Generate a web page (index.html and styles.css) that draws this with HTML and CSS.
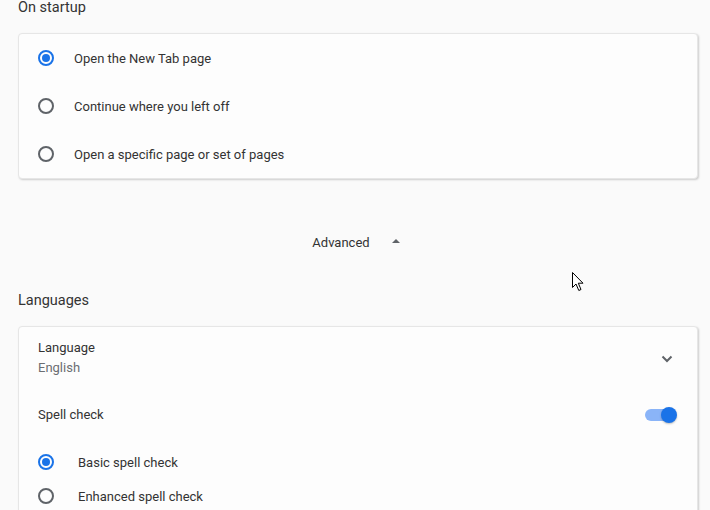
FILE: index.html
```
<!DOCTYPE html>
<html lang="en">
<head>
    <meta charset="UTF-8">
    <meta name="viewport" content="width=device-width, initial-scale=1.0">
    <title>Settings</title>
    <link rel="stylesheet" href="styles.css">
</head>
<body>
    <div class="page">
        <h2 class="section-title">On startup</h2>
        <div class="card">
            <label class="radio-row">
                <span class="radio checked"></span>
                <span class="radio-label">Open the New Tab page</span>
            </label>
            <label class="radio-row">
                <span class="radio"></span>
                <span class="radio-label">Continue where you left off</span>
            </label>
            <label class="radio-row">
                <span class="radio"></span>
                <span class="radio-label">Open a specific page or set of pages</span>
            </label>
        </div>

        <div class="advanced">
            <span>Advanced</span>
            <span class="arrow-up"></span>
        </div>

        <h2 class="section-title">Languages</h2>
        <div class="card">
            <div class="setting-row tall">
                <div class="setting-text">
                    <div>Language</div>
                    <div class="secondary">English</div>
                </div>
                <svg class="chevron" width="12" height="8" viewBox="0 0 12 8">
                    <path d="M1.5 1.5 L6 6 L10.5 1.5" fill="none" stroke="#5f6368" stroke-width="2"/>
                </svg>
            </div>
            <div class="setting-row">
                <div class="setting-text">Spell check</div>
                <span class="toggle"><span class="knob"></span></span>
            </div>
            <div class="radio-group">
                <label class="radio-row small">
                    <span class="radio checked"></span>
                    <span class="radio-label">Basic spell check</span>
                </label>
                <label class="radio-row small">
                    <span class="radio"></span>
                    <span class="radio-label">Enhanced spell check</span>
                </label>
            </div>
        </div>
    </div>

    <svg class="cursor" width="13" height="20" viewBox="0 0 13 20">
        <path d="M0.5 0.5 L0.5 15.5 L4 12 L6.8 18.5 L9 17.5 L6.3 11.2 L11 11.2 Z" fill="#fff" stroke="#000" stroke-width="1"/>
    </svg>
</body>
</html>
```

FILE: styles.css
```
body {
    margin: 0;
    font-family: Roboto, "Noto Sans", Arial, sans-serif;
    font-size: 13px;
    color: #333;
    background-color: #fafafa;
    overflow: hidden;
}

.page {
    padding: 0 12px 0 18px;
}

.section-title {
    font-size: 14.5px;
    font-weight: 400;
    line-height: 16px;
    margin: 0 0 17px;
}

.card {
    background-color: #fdfdfd;
    border: 1px solid #e6e6e6;
    border-radius: 4px;
    box-shadow: 1px 1px 2px rgba(0, 0, 0, 0.18);
}

.radio-row {
    display: flex;
    align-items: center;
    height: 48px;
    padding-left: 19px;
}

.radio-row.small {
    height: 34px;
}

.radio {
    width: 16px;
    height: 16px;
    border: 2px solid #5f6368;
    border-radius: 50%;
    box-sizing: border-box;
    margin-right: 20px;
    position: relative;
}

.radio-row.small .radio {
    margin-right: 24px;
}

.radio.checked {
    border-color: #1a73e8;
}

.radio.checked::after {
    content: "";
    position: absolute;
    left: 2px;
    top: 2px;
    width: 8px;
    height: 8px;
    border-radius: 50%;
    background-color: #1a73e8;
}

.advanced {
    display: flex;
    justify-content: center;
    align-items: center;
    height: 48px;
    margin: 39px 0 27px;
    padding-right: 4px;
    gap: 22px;
}

.arrow-up {
    width: 0;
    height: 0;
    border-left: 4px solid transparent;
    border-right: 4px solid transparent;
    border-bottom: 4px solid #5f6368;
    margin-top: -2px;
}

.setting-row {
    display: flex;
    align-items: center;
    justify-content: space-between;
    height: 48px;
    padding: 0 19px 0 19px;
}

.setting-row.tall {
    height: 64px;
    padding-right: 24px;
}

.setting-row.tall .setting-text {
    margin-top: -3px;
}

.setting-text {
    line-height: 20px;
}

.secondary {
    color: #6b6e72;
}

.toggle {
    position: relative;
    width: 26px;
    height: 12px;
    border-radius: 6px;
    background-color: #8ab4f8;
    margin-right: 7px;
}

.knob {
    position: absolute;
    right: -6px;
    top: -2px;
    width: 16px;
    height: 16px;
    border-radius: 50%;
    background-color: #1a73e8;
    box-shadow: 0 1px 2px rgba(0, 0, 0, 0.25);
}

.radio-group {
    padding-top: 6px;
}

.cursor {
    position: absolute;
    left: 572px;
    top: 272px;
}
```
